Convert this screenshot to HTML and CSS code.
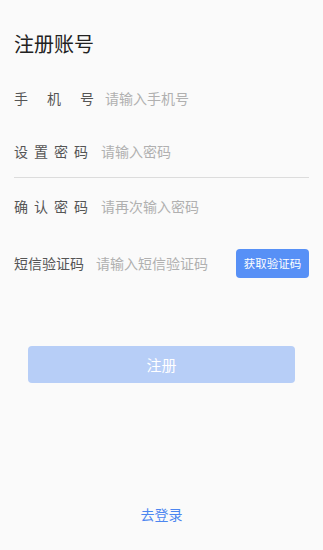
FILE: index.html
```html
<!DOCTYPE html>
<html lang="zh-CN">
<head>
<meta charset="utf-8">
<title>注册账号</title>
<link rel="stylesheet" href="styles.css">
</head>
<body>
<div class="page">
  <h1 class="title">注册账号</h1>
  <div class="form">
    <div class="row row-1">
      <span class="label label-justify">手机号</span>
      <input class="field field-1" type="text" placeholder="请输入手机号">
    </div>
    <div class="row row-2">
      <span class="label label-spaced">设置密码</span>
      <input class="field field-2" type="password" placeholder="请输入密码">
    </div>
    <div class="row row-3">
      <span class="label label-spaced">确认密码</span>
      <input class="field field-2" type="password" placeholder="请再次输入密码">
    </div>
    <div class="row row-4">
      <span class="label">短信验证码</span>
      <input class="field field-4" type="text" placeholder="请输入短信验证码">
      <button class="code-btn" type="button">获取验证码</button>
    </div>
  </div>
  <button class="submit" type="button">注册</button>
  <div class="login-wrap"><a class="login" href="#">去登录</a></div>
</div>
</body>
</html>
```

FILE: styles.css
```css
html, body {
  margin: 0;
  padding: 0;
  background: #fafafa;
}
body {
  font-family: "Noto Sans CJK SC", "Noto Sans", sans-serif;
  width: 323px;
  height: 550px;
  overflow: hidden;
}
.page {
  padding: 0 14px;
  display: flex;
  flex-direction: column;
}
.title {
  margin: 30px 0 0 0;
  font-size: 20px;
  line-height: 28px;
  font-weight: 400;
  color: #222;
}
.form {
  margin-top: 12px;
  display: flex;
  flex-direction: column;
}
.row {
  display: flex;
  align-items: center;
}
.row-1 { height: 55px; }
.row-2 { height: 52px; border-bottom: 1px solid #dcdcdc; }
.row-3 { height: 56px; }
.row-4 { height: 58px; }
.label {
  flex: none;
  font-size: 14px;
  line-height: 20px;
  color: #555;
  white-space: nowrap;
}
.label-justify {
  width: 80px;
  text-align: justify;
  text-align-last: justify;
}
.label-spaced {
  letter-spacing: 6px;
}
.field {
  flex: 1;
  min-width: 0;
  border: none;
  outline: none;
  background: transparent;
  padding: 0;
  font-family: inherit;
  font-size: 14px;
  line-height: 20px;
  color: #333;
}
.field::placeholder {
  color: #b0b0b0;
}
.field-1 { margin-left: 11px; }
.field-2 { margin-left: 7px; }
.field-4 { margin-left: 12px; }
.code-btn {
  flex: none;
  width: 73px;
  height: 29px;
  padding: 0;
  border: none;
  border-radius: 4px;
  background: #5790f6;
  color: #fff;
  font-family: inherit;
  font-size: 11.5px;
  line-height: 29px;
}
.submit {
  margin: 54px 14px 0 14px;
  height: 37px;
  border: none;
  border-radius: 4px;
  background: #b7cef7;
  color: #fff;
  font-family: inherit;
  font-size: 15px;
  padding: 0;
}
.login-wrap {
  margin-top: 120px;
  text-align: center;
  line-height: 20px;
}
.login {
  font-size: 14px;
  color: #4c86f0;
  text-decoration: none;
}
```
